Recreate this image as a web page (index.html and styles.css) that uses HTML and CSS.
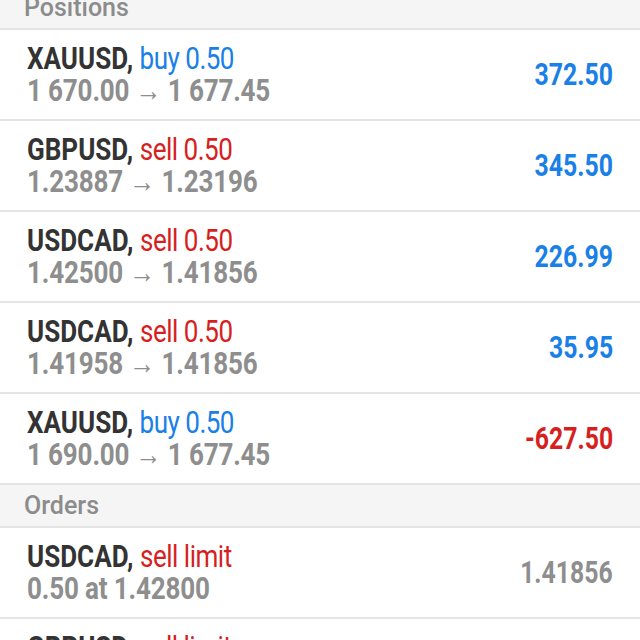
FILE: index.html
```html
<!DOCTYPE html>
<html lang="en">
<head>
    <meta charset="UTF-8">
    <title>Trade</title>
    <link rel="stylesheet" href="styles.css">
</head>
<body>
    <div class="section first">Positions</div>
    <div class="row">
        <div class="info">
            <div class="title">XAUUSD, <span class="buy">buy 0.50</span></div>
            <div class="sub">1 670.00 &rarr; 1 677.45</div>
        </div>
        <div class="profit up">372.50</div>
    </div>
    <div class="row">
        <div class="info">
            <div class="title">GBPUSD, <span class="sell">sell 0.50</span></div>
            <div class="sub">1.23887 &rarr; 1.23196</div>
        </div>
        <div class="profit up">345.50</div>
    </div>
    <div class="row">
        <div class="info">
            <div class="title">USDCAD, <span class="sell">sell 0.50</span></div>
            <div class="sub">1.42500 &rarr; 1.41856</div>
        </div>
        <div class="profit up">226.99</div>
    </div>
    <div class="row">
        <div class="info">
            <div class="title">USDCAD, <span class="sell">sell 0.50</span></div>
            <div class="sub">1.41958 &rarr; 1.41856</div>
        </div>
        <div class="profit up">35.95</div>
    </div>
    <div class="row">
        <div class="info">
            <div class="title">XAUUSD, <span class="buy">buy 0.50</span></div>
            <div class="sub">1 690.00 &rarr; 1 677.45</div>
        </div>
        <div class="profit down">-627.50</div>
    </div>
    <div class="section">Orders</div>
    <div class="row">
        <div class="info">
            <div class="title">USDCAD, <span class="sell">sell limit</span></div>
            <div class="sub">0.50 at 1.42800</div>
        </div>
        <div class="profit price">1.41856</div>
    </div>
    <div class="row">
        <div class="info">
            <div class="title">GBPUSD, <span class="sell">sell limit</span></div>
            <div class="sub">0.50 at 1.24500</div>
        </div>
        <div class="profit price">1.23196</div>
    </div>
</body>
</html>
```

FILE: styles.css
```css
body {
    margin: 0;
    background: #fff;
    font-family: 'Roboto', sans-serif;
    overflow: hidden;
    height: 640px;
}

.section {
    background-color: #f5f5f5;
    color: #8c8c8c;
    font-size: 25px;
    font-weight: 500;
    height: 41px;
    line-height: 41px;
    padding-left: 24px;
    border-bottom: 2px solid #e4e4e4;
}

.section.first {
    margin-top: -13px;
}

.row {
    display: flex;
    align-items: center;
    justify-content: space-between;
    height: 89px;
    padding: 0 27px;
    border-bottom: 2px solid #e4e4e4;
}

/* the app uses a condensed face, squeeze Roboto to match */
.info, .profit {
    display: inline-block;
    white-space: nowrap;
    transform: scaleX(0.84);
    transform-origin: left center;
}

.title {
    font-size: 31px;
    font-weight: 700;
    color: #333;
    line-height: 32px;
}

.title span {
    font-weight: 400;
    letter-spacing: -0.6px;
}

.sub {
    font-size: 31px;
    font-weight: 700;
    color: #8e8e8e;
    line-height: 32px;
    letter-spacing: -0.2px;
}

.buy {
    color: #1a7fe6;
}

.sell {
    color: #d61f1f;
}

.profit {
    font-size: 31px;
    font-weight: 700;
    transform: scaleX(0.8);
    transform-origin: right center;
}

.up {
    color: #1a7fe6;
}

.down {
    color: #d61f1f;
}

.price {
    color: #8e8e8e;
}
```
